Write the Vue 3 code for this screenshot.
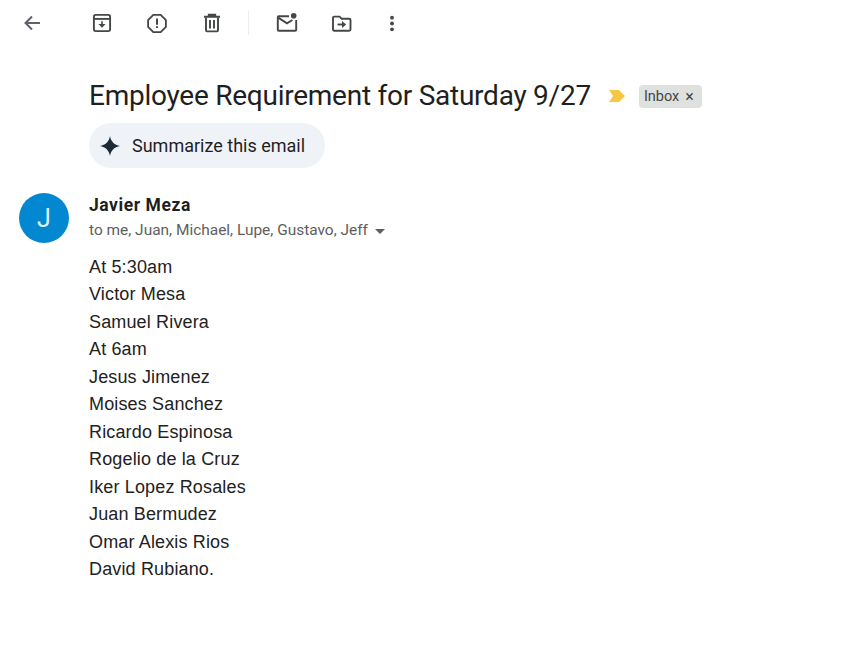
<template>
  <div class="mail">
    <!-- Toolbar -->
    <div class="toolbar">
      <button class="tool" type="button">
        <svg class="icon" viewBox="0 0 24 24" fill="none" stroke="#5f6368" stroke-width="2">
          <path d="M20 12H6M12 5.500 5.500 12l6.500 6.500"/>
        </svg>
      </button>
      <div class="group main-group">
        <button class="tool" type="button">
          <svg class="icon" viewBox="0 0 24 24" fill="none" stroke="#444746" stroke-width="1.900">
            <rect x="3.900" y="3.900" width="16.200" height="16.200" rx="1.800"/>
            <path d="M4 7.900h16"/>
            <path d="M12 10.200v3.600" stroke-width="1.600"/>
            <path d="M8.400 13h7.200L12 16.800z" fill="#444746" stroke="none"/>
          </svg>
        </button>
        <button class="tool" type="button">
          <svg class="icon" viewBox="0 0 24 24" fill="none" stroke="#444746" stroke-width="1.800">
            <path d="M8.300 3.900h7.400l5.200 5.200v6.800l-5.200 5.200H8.300l-5.200-5.200V9.100z"/>
            <path d="M12 7.400v6.300M12 15.200v1.800" stroke-width="2"/>
          </svg>
        </button>
        <button class="tool" type="button">
          <svg class="icon" viewBox="0 0 24 24" fill="none" stroke="#444746" stroke-width="1.900">
            <path d="M6 6.500v12.700c0 .7.500 1.200 1.200 1.200h9.600c.7 0 1.200-.500 1.200-1.200V6.500"/>
            <path d="M4 5.800h16M8.800 5.600V3.700h6.400v1.900"/>
            <path d="M10 9v8.500M14 9v8.500"/>
          </svg>
        </button>
      </div>
      <span class="divider"></span>
      <div class="group">
        <button class="tool" type="button">
          <svg class="icon" viewBox="0 0 24 24" fill="none" stroke="#444746" stroke-width="1.900">
            <path d="M14 5.200H3.800c-.6 0-1 .4-1 1v12.600c0 .6.4 1 1 1h16.400c.6 0 1-.4 1-1V9"/>
            <path d="m3.200 6.600 8.800 5.800 5.400-3.400"/>
            <circle cx="18.700" cy="4.800" r="2.800" fill="#444746" stroke="none"/>
          </svg>
        </button>
        <button class="tool" type="button">
          <svg class="icon" viewBox="0 0 24 24" fill="none" stroke="#444746" stroke-width="1.900">
            <path d="M3 6.800c0-.7.500-1.200 1.200-1.200h5.400l2 2.200h7.700c.7 0 1.200.5 1.200 1.200v9.500c0 .7-.5 1.200-1.200 1.200H4.200c-.7 0-1.200-.5-1.200-1.200z"/>
            <path d="M7.500 13.500h6"/>
            <path d="M12 10l4.200 3.500-4.200 3.500z" fill="#444746" stroke="none"/>
          </svg>
        </button>
        <button class="tool dots" type="button">
          <svg class="icon" viewBox="0 0 24 24" fill="#444746">
            <circle cx="12" cy="6.700" r="1.900"/>
            <circle cx="12" cy="12.500" r="1.900"/>
            <circle cx="12" cy="18.300" r="1.900"/>
          </svg>
        </button>
      </div>
    </div>

    <!-- Subject -->
    <div class="subject-row">
      <h1 class="subject">{{ subject }}</h1>
      <svg class="marker" width="16" height="12" viewBox="0 0 16 12"><path d="M0 0h10l6 6-6 6H0l4-6z" fill="#f6c644"/></svg>
      <span class="label">Inbox<span class="label-x">×</span></span>
    </div>

    <button class="summarize" type="button">
      <svg width="20" height="20" viewBox="0 0 20 20"><path d="M10 0c.8 5.400 4.600 9.200 10 10-5.400.8-9.200 4.600-10 10-.8-5.400-4.600-9.200-10-10C5.400 9.200 9.200 5.400 10 0z" fill="#1f2a37"/></svg>
      <span>Summarize this email</span>
    </button>

    <!-- Message -->
    <div class="message">
      <div class="avatar">J</div>
      <div class="content">
        <div class="sender">Javier Meza</div>
        <div class="recipients">
          <span>to me, Juan, Michael, Lupe, Gustavo, Jeff</span>
          <i class="caret"></i>
        </div>
        <div class="body">
          <div v-for="line in lines" :key="line">{{ line }}</div>
        </div>
      </div>
    </div>
  </div>
</template>

<script setup>
const subject = 'Employee Requirement for Saturday 9/27'

const lines = [
  'At 5:30am',
  'Victor Mesa',
  'Samuel Rivera',
  'At 6am',
  'Jesus Jimenez',
  'Moises Sanchez',
  'Ricardo Espinosa',
  'Rogelio de la Cruz',
  'Iker Lopez Rosales',
  'Juan Bermudez',
  'Omar Alexis Rios',
  'David Rubiano.',
]
</script>

<style>
html, body {
  background: #fff;
}
</style>

<style scoped>
.mail {
  width: 850px;
  height: 669px;
  overflow: hidden;
  background: #fff;
  color: #1f1f1f;
  font-family: Roboto, "Liberation Sans", sans-serif;
}

.toolbar {
  display: flex;
  align-items: center;
  height: 46px;
  padding-left: 20px;
}

.group {
  display: flex;
  align-items: center;
  gap: 31px;
}

.main-group {
  margin-left: 46px;
}

.tool {
  display: block;
  width: 24px;
  height: 24px;
  padding: 0;
  border: none;
  background: none;
}

.icon {
  display: block;
  width: 24px;
  height: 24px;
}

.dots {
  margin-left: -5px;
}

.divider {
  width: 1px;
  height: 24px;
  margin: 0 26px 0 24px;
  background: #eceded;
}

.subject-row {
  display: flex;
  align-items: center;
  height: 40px;
  margin-top: 30px;
  padding-left: 89px;
}

.subject {
  margin: 0;
  font-size: 28px;
  font-weight: 400;
  letter-spacing: -0.25px;
  line-height: 40px;
  white-space: nowrap;
  color: #1f1f1f;
}

.marker {
  margin-left: 18px;
}

.label {
  display: flex;
  align-items: center;
  gap: 6px;
  width: 63px;
  height: 23px;
  box-sizing: border-box;
  margin-left: 14px;
  padding-left: 5px;
  border-radius: 4px;
  background: #dfe1df;
  color: #444746;
  font-size: 14.500px;
  white-space: nowrap;
}

.label-x {
  font-size: 16px;
}

.summarize {
  display: flex;
  align-items: center;
  gap: 12px;
  width: 236px;
  height: 45px;
  margin: 7px 0 0 89px;
  padding: 0 0 0 11px;
  border: none;
  border-radius: 22px;
  background: #eff3f8;
  color: #1f1f1f;
  font-family: inherit;
  font-size: 18px;
}

.message {
  display: flex;
  margin-top: 25px;
  padding-left: 19px;
}

.avatar {
  display: flex;
  flex: none;
  align-items: center;
  justify-content: center;
  width: 50px;
  height: 50px;
  border-radius: 50%;
  background: #0288d1;
  color: #e3f2fb;
  font-size: 25px;
}

.content {
  margin-left: 20px;
}

.sender {
  font-size: 17.500px;
  font-weight: 700;
  letter-spacing: 0.550px;
  line-height: 24px;
}

.recipients {
  display: flex;
  align-items: center;
  height: 20px;
  margin-top: 3px;
  color: #5e5e5e;
  font-size: 15.450px;
}

.caret {
  width: 0;
  height: 0;
  margin: 2px 0 0 7px;
  border-left: 5.500px solid transparent;
  border-right: 5.500px solid transparent;
  border-top: 5.500px solid #5e5e5e;
}

.body {
  margin-top: 13.500px;
  font-family: "Liberation Sans", Arial, sans-serif;
  font-size: 18px;
  letter-spacing: 0.150px;
  line-height: 27.500px;
  color: #222;
}
</style>
